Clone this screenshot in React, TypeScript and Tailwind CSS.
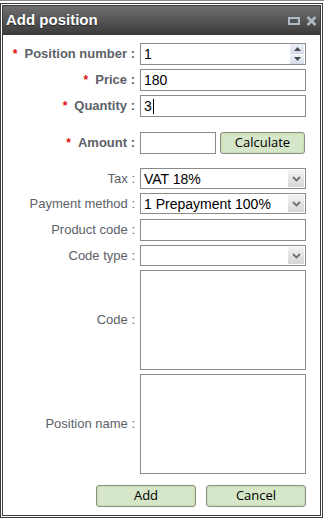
import { ReactNode } from "react";

function Label({ text, required, bold }: { text: string; required?: boolean; bold?: boolean }) {
  return (
    <div className={`w-[137px] shrink-0 pr-[5px] text-right text-[13px] text-[#5c6168] ${bold ? "font-bold" : ""}`}>
      {required && <span className="mr-[7px] text-[12px] font-bold text-[#e01010]">*</span>}
      {text} :
    </div>
  );
}

function Row({ children, h, className = "" }: { children: ReactNode; h: string; className?: string }) {
  return <div className={`flex items-center ${h} ${className}`}>{children}</div>;
}

function Chevron() {
  return (
    <svg width="9" height="6" viewBox="0 0 9 6">
      <path d="M1 1 L4.5 4.5 L8 1" fill="none" stroke="#707070" strokeWidth="1.8" />
    </svg>
  );
}

function Select({ value, h }: { value?: string; h: string }) {
  return (
    <div className={`flex w-[166px] ${h} items-center border border-[#8a8a8a] bg-white`}>
      <span className="flex-1 pl-[3px] text-[14px] leading-none text-black">{value}</span>
      <span className="mr-[1px] flex h-[17px] w-[16px] items-center justify-center bg-gradient-to-b from-[#f2f2f2] to-[#d6d6d6]">
        <Chevron />
      </span>
    </div>
  );
}

function TextBox({ value, w = "w-[166px]", h = "h-[22px]", caret }: { value?: string; w?: string; h?: string; caret?: boolean }) {
  return (
    <div className={`flex ${w} ${h} items-center border border-[#8a8a8a] bg-white pl-[3px] text-[14px] text-black`}>
      {value}
      {caret && <span className="ml-[1px] h-[15px] w-px bg-black" />}
    </div>
  );
}

function GreenButton({ label, w }: { label: string; w: string }) {
  return (
    <div className={`relative flex ${w} h-[22px] items-center justify-center rounded-[3px] border border-[#8c8c8c] bg-[#d6e6c9] text-[13px] text-black shadow-[inset_0_0_2px_#a8d46a] [font-family:'Open_Sans','Liberation_Sans',sans-serif]`}>
      {label}
    </div>
  );
}

export default function App() {
  return (
    <div className="h-[520px] w-[324px] overflow-hidden bg-white [font-family:'Liberation_Sans',Arial,sans-serif]">
      <div className="h-[3px] border-t border-[#8a8a8a]" />
      <div className="flex h-[515px] w-[323px] flex-col border-[3px] border-double border-[#3c3c3c]">
        {/* Title bar */}
        <div className="flex h-[29px] shrink-0 items-center justify-between bg-gradient-to-b from-[#6e6e6e] via-[#555555] to-[#3a3a3a] pl-[3px] pr-[3px]">
          <span className="text-[15px] font-bold text-white [text-shadow:0_1px_1px_#222]">Add position</span>
          <div className="flex items-center gap-[6px]">
            <span className="h-[8px] w-[12px] border-2 border-[#aebac6]" />
            <svg width="11" height="10" viewBox="0 0 11 10">
              <path d="M1.5 1 L9.5 9 M9.5 1 L1.5 9" stroke="#aebac6" strokeWidth="2.6" />
            </svg>
          </div>
        </div>

        {/* Body */}
        <div className="flex flex-1 flex-col pt-[8px]">
          <Row h="h-[22px]">
            <Label text="Position number" required bold />
            <div className="flex h-[22px] w-[166px] items-center border border-[#8a8a8a] bg-white">
              <span className="flex-1 pl-[3px] text-[14px] text-black">1</span>
              <span className="mr-[1px] flex h-[20px] w-[14px] flex-col">
                <span className="flex flex-1 items-center justify-center border-b border-white bg-gradient-to-b from-[#eef2f7] to-[#d3dce8]">
                  <svg width="7" height="4" viewBox="0 0 7 4"><path d="M0 4 L3.5 0 L7 4 Z" fill="#4a4a4a" /></svg>
                </span>
                <span className="flex flex-1 items-center justify-center bg-gradient-to-b from-[#eef2f7] to-[#d3dce8]">
                  <svg width="7" height="4" viewBox="0 0 7 4"><path d="M0 0 L3.5 4 L7 0 Z" fill="#4a4a4a" /></svg>
                </span>
              </span>
            </div>
          </Row>
          <Row h="h-[22px]" className="mt-[4px]">
            <Label text="Price" required bold />
            <TextBox value="180" />
          </Row>
          <Row h="h-[22px]" className="mt-[4px]">
            <Label text="Quantity" required bold />
            <TextBox value="3" caret />
          </Row>
          <Row h="h-[22px]" className="mt-[15px]">
            <Label text="Amount" required bold />
            <TextBox w="w-[76px]" />
            <div className="ml-[4px]">
              <GreenButton label="Calculate" w="w-[85px]" />
            </div>
          </Row>
          <Row h="h-[21px]" className="mt-[14px]">
            <Label text="Tax" />
            <Select value="VAT 18%" h="h-[21px]" />
          </Row>
          <Row h="h-[21px]" className="mt-[4px]">
            <Label text="Payment method" />
            <Select value="1 Prepayment 100%" h="h-[21px]" />
          </Row>
          <Row h="h-[22px]" className="mt-[5px]">
            <Label text="Product code" />
            <TextBox />
          </Row>
          <Row h="h-[21px]" className="mt-[4px]">
            <Label text="Code type" />
            <Select h="h-[21px]" />
          </Row>
          <Row h="h-[100px]" className="mt-[4px]">
            <Label text="Code" />
            <TextBox h="h-[100px]" />
          </Row>
          <Row h="h-[100px]" className="mt-[4px]">
            <Label text="Position name" />
            <TextBox h="h-[100px]" />
          </Row>
          <div className="mt-[11px] flex gap-[10px] pl-[93px]">
            <GreenButton label="Add" w="w-[100px]" />
            <GreenButton label="Cancel" w="w-[100px]" />
          </div>
        </div>
      </div>
    </div>
  );
}
